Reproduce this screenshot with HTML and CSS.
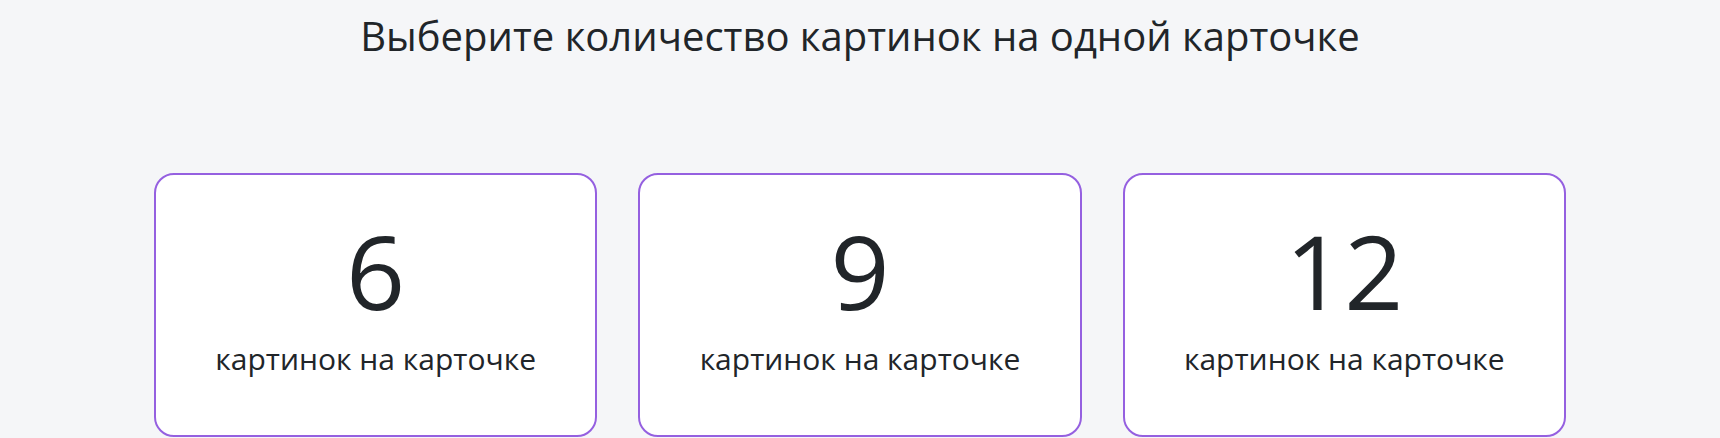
FILE: index.html
```html
<!DOCTYPE html>
<html lang="ru">
<head>
<meta charset="utf-8">
<link rel="stylesheet" href="styles.css">
</head>
<body>
<main class="page">
  <h1 class="title">Выберите количество картинок на одной карточке</h1>
  <div class="options">
    <div class="option">
      <div class="option-count">6</div>
      <div class="option-label">картинок на карточке</div>
    </div>
    <div class="option">
      <div class="option-count">9</div>
      <div class="option-label">картинок на карточке</div>
    </div>
    <div class="option">
      <div class="option-count">12</div>
      <div class="option-label">картинок на карточке</div>
    </div>
  </div>
</main>
</body>
</html>
```
FILE: styles.css
```css
html, body {
  margin: 0;
  padding: 0;
}
body {
  background: #f5f6f8;
  color: #212529;
  font-family: "Open Sans", "Noto Sans", sans-serif;
}
.page {
  display: flex;
  flex-direction: column;
  align-items: center;
  padding-top: 12px;
}
.title {
  margin: 0;
  font-size: 40px;
  font-weight: 400;
  line-height: 48px;
  text-align: center;
}
.options {
  margin-top: 113px;
  width: 1412px;
  display: grid;
  grid-template-columns: repeat(3, 1fr);
  gap: 41px;
}
.option {
  background: #fff;
  border: 2px solid #9560e0;
  border-radius: 20px;
  height: 264px;
  box-sizing: border-box;
  display: flex;
  flex-direction: column;
  align-items: center;
  padding-top: 43px;
}
.option-count {
  font-size: 103.4px;
  line-height: 103.4px;
}
.option-label {
  margin-top: 17px;
  font-size: 30px;
  line-height: 42px;
}
```
